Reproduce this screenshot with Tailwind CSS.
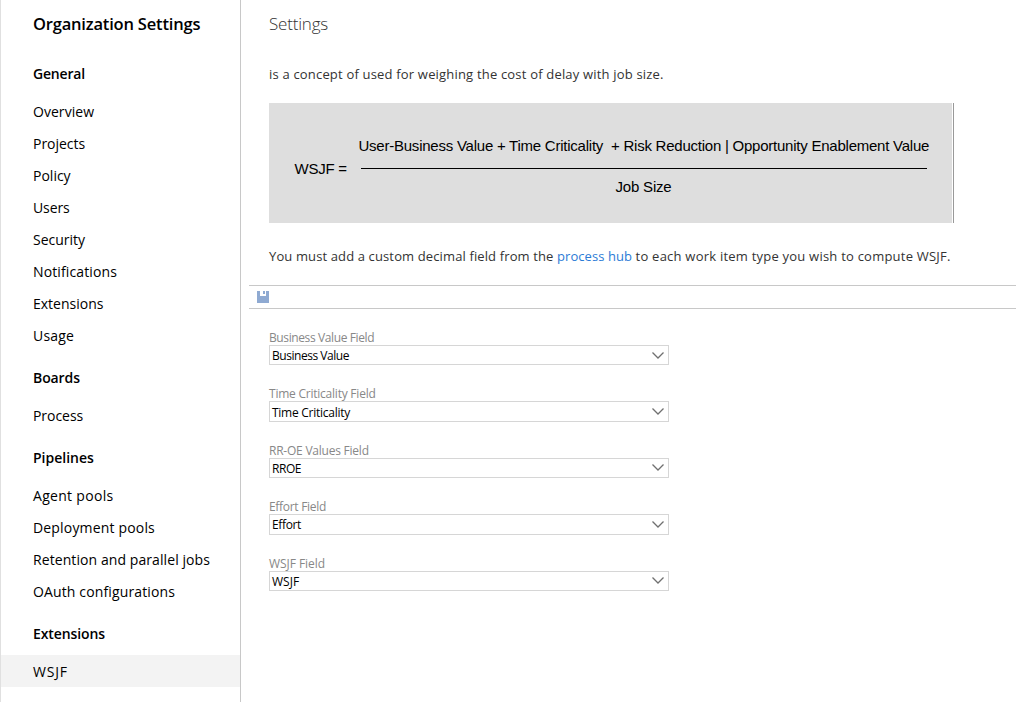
<!DOCTYPE html>
<html lang="en">
<head>
<meta charset="utf-8">
<title>Organization Settings</title>
<script src="https://cdn.jsdelivr.net/npm/@tailwindcss/browser@4"></script>
</head>
<body class="flex h-[702px] overflow-hidden bg-white font-['Open_Sans','Noto_Sans',sans-serif] text-black">
<aside class="w-[241px] shrink-0 border-l border-r border-l-[#e0e0e0] border-r-[#c8c8c8] text-[14px]">
  <h1 class="flex h-[47px] items-center pl-8 pt-0.5 text-[16.5px] font-semibold tracking-[-0.19px]">Organization Settings</h1>
  <nav class="whitespace-nowrap">
    <h2 class="flex h-12 items-center pb-px pl-8 pt-[5px] font-semibold tracking-[-0.18px]">General</h2>
    <a class="flex h-8 items-center pl-8 tracking-[0.04px]">Overview</a>
    <a class="flex h-8 items-center pl-8 tracking-[-0.04px]">Projects</a>
    <a class="flex h-8 items-center pl-8">Policy</a>
    <a class="flex h-8 items-center pl-8 tracking-[-0.1px]">Users</a>
    <a class="flex h-8 items-center pl-8">Security</a>
    <a class="flex h-8 items-center pl-8 tracking-[0.12px]">Notifications</a>
    <a class="flex h-8 items-center pl-8">Extensions</a>
    <a class="flex h-8 items-center pl-8 tracking-[0.2px]">Usage</a>
    <h2 class="flex h-12 items-center pl-8 pt-[5px] font-semibold tracking-[-0.1px]">Boards</h2>
    <a class="flex h-8 items-center pl-8 tracking-[-0.05px]">Process</a>
    <h2 class="flex h-12 items-center pl-8 pt-[5px] font-semibold">Pipelines</h2>
    <a class="flex h-8 items-center pl-8 tracking-[0.3px]">Agent pools</a>
    <a class="flex h-8 items-center pl-8 tracking-[0.17px]">Deployment pools</a>
    <a class="flex h-8 items-center pl-8 tracking-[0.08px]">Retention and parallel jobs</a>
    <a class="flex h-8 items-center pl-8 tracking-[0.13px]">OAuth configurations</a>
    <h2 class="flex h-12 items-center pl-8 pt-[5px] font-semibold tracking-[-0.1px]">Extensions</h2>
    <a class="flex h-8 items-center bg-[#f3f3f3] pl-8 tracking-[0.8px]">WSJF</a>
  </nav>
</aside>
<main class="min-w-0 flex-1 pl-2">
  <h1 class="flex h-[47px] items-center pl-5 text-[17px] font-light tracking-[-0.2px] text-[#333]">Settings</h1>
  <p class="flex h-14 items-center pl-5 text-[13px] tracking-[0.186px] text-[#333]">is a concept of used for weighing the cost of delay with job size.</p>
  <div class="ml-5 flex w-[685px] border-r border-[#999] pr-px font-['Liberation_Sans',Arial,sans-serif] text-[15px] leading-[17px]">
    <div class="flex h-[120px] w-full whitespace-nowrap bg-[#dedede]">
      <div class="w-[90px] pl-[25.5px] pt-[57px] tracking-[-0.25px]">WSJF =</div>
      <div class="pt-[34px]">
        <div class="-ml-[0.5px] whitespace-pre tracking-[-0.235px]">User-Business Value + Time Criticality  + Risk Reduction | Opportunity Enablement Value</div>
        <div class="ml-0.5 mt-3.5 h-px w-[566px] bg-black"></div>
        <div class="mt-[9px] pl-[256.5px] tracking-[-0.19px]">Job Size</div>
      </div>
    </div>
  </div>
  <p class="h-[62px] whitespace-nowrap pl-5 pt-6 text-[13px] leading-[18px] text-[#333]"><span class="tracking-[0.123px]">You must add a custom decimal field from the </span><a class="tracking-[0.065px] text-[#2b7bd6]">process hub</a><span class="tracking-[0.225px]"> to each work item type you wish to compute WSJF.</span></p>
  <div class="flex h-6 border-y border-[#c8c8c8] pl-2 pt-[5px]">
    <svg class="size-3" viewBox="0 0 12 12" shape-rendering="crispEdges"><path fill="#8faad2" d="M0 0h3v5h6V0h2l1 1v11H0z"/><path fill="#8faad2" d="M6 0h2v3H6z"/></svg>
  </div>
  <form class="w-[420px] pl-5 pt-[22px] text-[12px] leading-[14px]">
    <div class="h-[56.4px]">
      <label class="block tracking-[-0.39px] text-[#888]">Business Value Field</label>
      <div class="flex h-5 items-center justify-between border border-[#d6d6d6] pl-0.5 pr-1 tracking-[-0.46px]"><span class="pt-0.5">Business Value</span><svg class="h-[7px] w-3" viewBox="0 0 12 7" fill="none" stroke="#707070" stroke-width="1.3"><path d="M.5.5 6 6 11.5.5"/></svg></div>
    </div>
    <div class="h-[56.4px]">
      <label class="block tracking-[-0.23px] text-[#888]">Time Criticality Field</label>
      <div class="flex h-[20.4px] items-center justify-between border border-[#d6d6d6] pl-0.5 pr-1 tracking-[-0.26px]"><span class="pt-0.5">Time Criticality</span><svg class="h-[7px] w-3" viewBox="0 0 12 7" fill="none" stroke="#707070" stroke-width="1.3"><path d="M.5.5 6 6 11.5.5"/></svg></div>
    </div>
    <div class="h-[56.4px]">
      <label class="block tracking-[-0.23px] text-[#888]">RR-OE Values Field</label>
      <div class="flex h-5 items-center justify-between border border-[#d6d6d6] pl-0.5 pr-1 tracking-[-0.45px]"><span class="pt-0.5">RROE</span><svg class="h-[7px] w-3" viewBox="0 0 12 7" fill="none" stroke="#707070" stroke-width="1.3"><path d="M.5.5 6 6 11.5.5"/></svg></div>
    </div>
    <div class="h-[56.4px]">
      <label class="block tracking-[-0.3px] text-[#888]">Effort Field</label>
      <div class="flex h-[20.4px] items-center justify-between border border-[#d6d6d6] pl-0.5 pr-1 tracking-[-0.36px]"><span class="pt-0.5">Effort</span><svg class="h-[7px] w-3" viewBox="0 0 12 7" fill="none" stroke="#707070" stroke-width="1.3"><path d="M.5.5 6 6 11.5.5"/></svg></div>
    </div>
    <div class="h-[56.4px]">
      <label class="block tracking-[-0.05px] text-[#888]">WSJF Field</label>
      <div class="flex h-5 items-center justify-between border border-[#d6d6d6] pl-0.5 pr-1"><span class="pt-0.5">WSJF</span><svg class="h-[7px] w-3" viewBox="0 0 12 7" fill="none" stroke="#707070" stroke-width="1.3"><path d="M.5.5 6 6 11.5.5"/></svg></div>
    </div>
  </form>
</main>
</body>
</html>
